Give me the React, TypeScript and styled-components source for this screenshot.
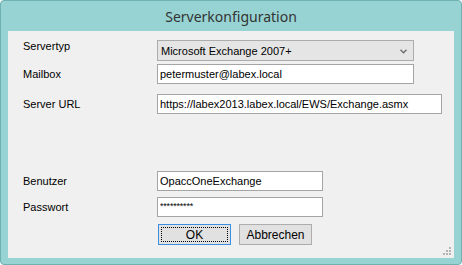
import styled, { createGlobalStyle } from "styled-components";

const GlobalStyle = createGlobalStyle`
  html, body {
    margin: 0;
    padding: 0;
    background: #ffffff;
  }
  * {
    box-sizing: border-box;
  }
`;

interface IField {
  label: string;
  value: string;
  width: number;
  gap: number;
  masked?: boolean;
}

const fields: IField[] = [
  { label: "Mailbox", value: "petermuster@labex.local", width: 257, gap: 3 },
  {
    label: "Server URL",
    value: "https://labex2013.labex.local/EWS/Exchange.asmx",
    width: 285,
    gap: 10,
  },
  { label: "Benutzer", value: "OpaccOneExchange", width: 166, gap: 57 },
  { label: "Passwort", value: "**********", width: 166, gap: 6, masked: true },
];

const App = () => {
  return (
    <>
      <GlobalStyle />
      <Window>
        <TitleBar>Serverkonfiguration</TitleBar>
        <Client>
          <Row $height={21} $gap={0}>
            <Label $top>Servertyp</Label>
            <ComboBox $width={257}>
              <span>Microsoft Exchange 2007+</span>
              <svg width="7" height="5" viewBox="0 0 7 5">
                <path d="M0.5 0.8 L3.5 3.8 L6.5 0.8" fill="none" stroke="#6b6b6b" strokeWidth="1.3" />
              </svg>
            </ComboBox>
          </Row>
          {fields.map((f) => (
            <Row key={f.label} $height={20} $gap={f.gap}>
              <Label>{f.label}</Label>
              <TextBox $width={f.width} $masked={f.masked} readOnly value={f.value} />
            </Row>
          ))}
          <ButtonRow>
            <Button $default>
              <FocusRect>OK</FocusRect>
            </Button>
            <Button>Abbrechen</Button>
          </ButtonRow>
          <Grip width="9" height="9" viewBox="0 0 9 9">
            <rect x="6" y="0" width="2" height="2" fill="#b4b4b4" />
            <rect x="3" y="3" width="2" height="2" fill="#b4b4b4" />
            <rect x="6" y="3" width="2" height="2" fill="#b4b4b4" />
            <rect x="0" y="6" width="2" height="2" fill="#b4b4b4" />
            <rect x="3" y="6" width="2" height="2" fill="#b4b4b4" />
            <rect x="6" y="6" width="2" height="2" fill="#b4b4b4" />
          </Grip>
        </Client>
      </Window>
    </>
  );
};

const Window = styled.div`
  display: flex;
  flex-direction: column;
  width: 462px;
  height: 265px;
  padding: 0 7px 6px 7px;
  background-color: #97d3d2;
  border: 1px solid #6fb0b0;
  border-radius: 4px;
`;

const TitleBar = styled.div`
  display: flex;
  align-items: center;
  justify-content: center;
  height: 30px;
  flex-shrink: 0;
  font-family: "Noto Sans", "Open Sans", sans-serif;
  font-size: 14px;
  color: #333333;
`;

const Client = styled.div`
  position: relative;
  flex: 1;
  display: flex;
  flex-direction: column;
  padding: 9px 0 0 15px;
  background-color: #f0f0f0;
  font-family: "Liberation Sans", Arial, sans-serif;
  font-size: 11px;
  color: #000000;
`;

const Row = styled.div<{ $height: number; $gap: number }>`
  display: grid;
  grid-template-columns: 134px auto;
  align-items: center;
  height: ${(p) => p.$height}px;
  margin-top: ${(p) => p.$gap}px;
`;

const Label = styled.span<{ $top?: boolean }>`
  align-self: ${(p) => (p.$top ? "start" : "center")};
  line-height: 13px;
`;

const TextBox = styled.input<{ $width: number; $masked?: boolean }>`
  width: ${(p) => p.$width}px;
  height: 20px;
  margin: 0;
  padding: 0 0 ${(p) => (p.$masked ? "3px" : "0")} 2px;
  border: 1px solid #a5a5a5;
  background: #ffffff;
  font-family: "Liberation Sans", Arial, sans-serif;
  font-size: ${(p) => (p.$masked ? "9px" : "11px")};
  letter-spacing: ${(p) => (p.$masked ? "-0.2px" : "normal")};
  color: #000000;
  outline: none;
`;

const ComboBox = styled.div<{ $width: number }>`
  display: flex;
  align-items: center;
  justify-content: space-between;
  width: ${(p) => p.$width}px;
  height: 21px;
  padding: 0 6px 0 3px;
  border: 1px solid #acacac;
  background: #e5e5e5;

  svg {
    margin-top: 1px;
  }
`;

const ButtonRow = styled.div`
  display: flex;
  gap: 8px;
  margin-top: 7px;
  padding-left: 135px;
`;

const Button = styled.div<{ $default?: boolean }>`
  display: flex;
  align-items: center;
  justify-content: center;
  width: 73px;
  height: 21px;
  padding: 2px;
  border: 1px solid ${(p) => (p.$default ? "#3c8ee0" : "#adadad")};
  background: #e1e1e1;
  font-size: 12px;
`;

const FocusRect = styled.span`
  display: flex;
  align-items: center;
  justify-content: center;
  width: 100%;
  height: 100%;
  border: 1px dotted #000000;
`;

const Grip = styled.svg`
  position: absolute;
  right: 2px;
  bottom: 2px;
`;

export default App;
